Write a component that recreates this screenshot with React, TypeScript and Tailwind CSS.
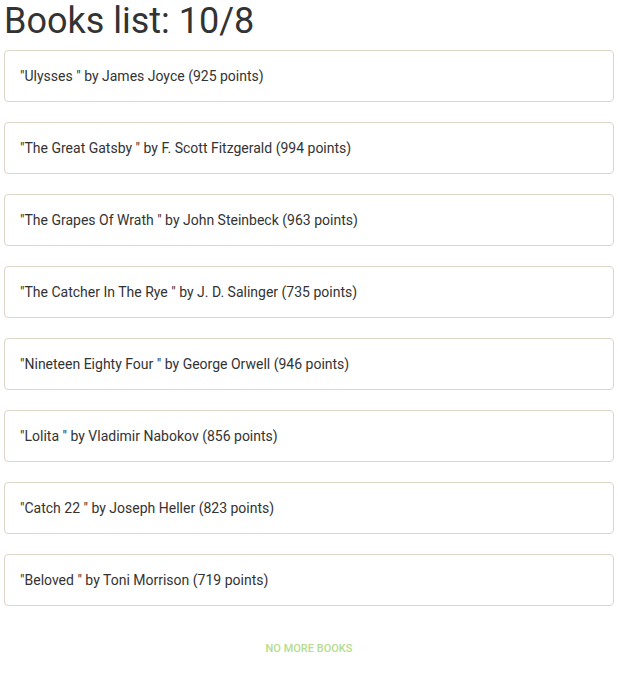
const books = [
  { title: "Ulysses", author: "James Joyce", points: 925 },
  { title: "The Great Gatsby", author: "F. Scott Fitzgerald", points: 994 },
  { title: "The Grapes Of Wrath", author: "John Steinbeck", points: 963 },
  { title: "The Catcher In The Rye", author: "J. D. Salinger", points: 735 },
  { title: "Nineteen Eighty Four", author: "George Orwell", points: 946 },
  { title: "Lolita", author: "Vladimir Nabokov", points: 856 },
  { title: "Catch 22", author: "Joseph Heller", points: 823 },
  { title: "Beloved", author: "Toni Morrison", points: 719 },
];

export default function App() {
  return (
    <div className="bg-white px-1 font-['Roboto',sans-serif] text-[#333]">
      <h1 className="text-[36px] leading-[42px] text-[#333]">Books list: 10/8</h1>

      <ul className="mt-2 flex flex-col gap-5">
        {books.map((book) => (
          <li
            key={book.title}
            className="flex h-[52px] items-center rounded border border-[#ddd5c8] pl-[15px] text-sm text-[#333]"
          >
            "{book.title} " by {book.author} ({book.points} points)
          </li>
        ))}
      </ul>

      <p className="mt-[35px] pb-7 text-center text-[11px] font-medium uppercase text-[#b6dc8c]">
        No more books
      </p>
    </div>
  );
}
